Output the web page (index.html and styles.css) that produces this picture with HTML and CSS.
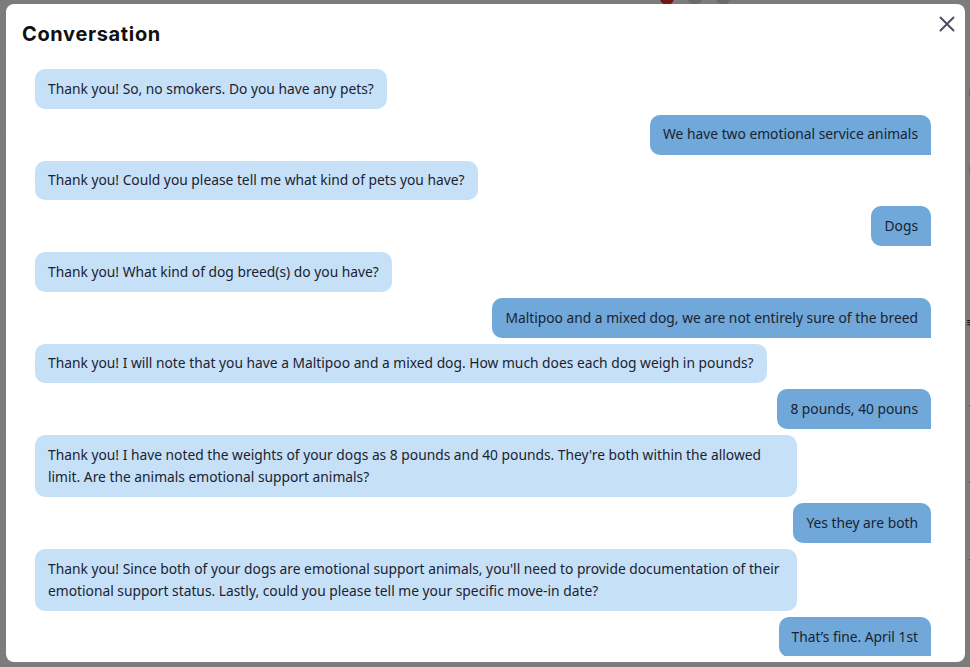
FILE: index.html
```html
<!DOCTYPE html>
<html lang="en">
<head>
<meta charset="utf-8">
<title>Conversation</title>
<link rel="stylesheet" href="styles.css">
</head>
<body>
<div class="page">
  <div class="topbar">
    <span class="dot dot-red"></span>
    <span class="dot"></span>
    <span class="dot"></span>
  </div>
  <div class="row"><span class="frag">r</span></div>
  <div class="row"><span class="frag frag-blue">r</span></div>
  <div class="row"></div>
  <div class="row"><span class="frag">≡</span></div>
  <div class="row"><span class="frag">J</span></div>
  <div class="row"><span class="frag">J</span></div>
  <div class="row"><span class="frag">J</span></div>
  <div class="row"></div>
</div>
<div class="overlay"></div>
<div class="modal" role="dialog" aria-labelledby="modal-title">
  <header class="modal-header">
    <h2 id="modal-title" class="modal-title">Conversation</h2>
    <button class="close" aria-label="Close">
      <svg width="16" height="16" viewBox="0 0 16 16"><path d="M1.5 1.5 L14.5 14.5 M14.5 1.5 L1.5 14.5" stroke="currentColor" stroke-width="2" stroke-linecap="round" fill="none"/></svg>
    </button>
  </header>
  <div class="messages">
    <div class="bubble bot">Thank you! So, no smokers. Do you have any pets?</div>
    <div class="bubble user">We have two emotional service animals</div>
    <div class="bubble bot">Thank you! Could you please tell me what kind of pets you have?</div>
    <div class="bubble user">Dogs</div>
    <div class="bubble bot">Thank you! What kind of dog breed(s) do you have?</div>
    <div class="bubble user">Maltipoo and a mixed dog, we are not entirely sure of the breed</div>
    <div class="bubble bot">Thank you! I will note that you have a Maltipoo and a mixed dog. How much does each dog weigh in pounds?</div>
    <div class="bubble user">8 pounds, 40 pouns</div>
    <div class="bubble bot">Thank you! I have noted the weights of your dogs as 8 pounds and 40 pounds. They're both within the allowed limit. Are the animals emotional support animals?</div>
    <div class="bubble user">Yes they are both</div>
    <div class="bubble bot">Thank you! Since both of your dogs are emotional support animals, you'll need to provide documentation of their emotional support status. Lastly, could you please tell me your specific move-in date?</div>
    <div class="bubble user">That’s fine. April 1st</div>
  </div>
</div>
</body>
</html>
```
FILE: styles.css
```css
* { box-sizing: border-box; }

html, body {
  margin: 0;
  height: 100%;
  overflow: hidden;
}

body {
  font-family: "Noto Sans", "Open Sans", sans-serif;
  background: #f8f8f8;
}

/* underlying page (seen through the overlay) */
.page {
  height: 100%;
}

.topbar {
  height: 53px;
  display: flex;
  align-items: flex-start;
  gap: 14px;
  padding-left: 660px;
  border-bottom: 1px solid #ffffff;
}

.dot {
  width: 14px;
  height: 14px;
  margin-top: -9px;
  border-radius: 50%;
  background: #d6d6d6;
}

.dot-red {
  background: #e03232;
}

.row {
  height: 77px;
  border-bottom: 1px solid #ffffff;
  display: flex;
  align-items: center;
  justify-content: flex-end;
  overflow: hidden;
}

.frag {
  font-size: 13px;
  color: #2a0f3a;
  margin-right: -4px;
}

.frag-blue { color: #1f4a7a; }

.overlay {
  position: fixed;
  inset: 0;
  background: rgba(0, 0, 0, 0.5);
}

/* modal */
.modal {
  position: fixed;
  left: 6px;
  top: 4px;
  width: 959px;
  height: 658px;
  background: #ffffff;
  border-radius: 8px;
  display: flex;
  flex-direction: column;
  padding-bottom: 6px;
}

.modal-header {
  display: flex;
  align-items: flex-start;
  justify-content: space-between;
  padding: 16px 10px 0 16px;
}

.modal-title {
  margin: 0;
  font-family: "Inter", "Noto Sans", sans-serif;
  font-weight: 700;
  font-size: 20px;
  letter-spacing: 0.65px;
  line-height: 28px;
  color: #111111;
}

.close {
  border: 0;
  background: none;
  padding: 0;
  margin-top: -4px;
  width: 16px;
  height: 16px;
  color: #4b5060;
  cursor: pointer;
}

.close svg { display: block; }

.messages {
  flex: 1;
  min-height: 0;
  overflow: hidden;
  margin-top: 21px;
  padding: 0 34px 0 29px;
  display: flex;
  flex-direction: column;
  gap: 6px;
}

.bubble {
  max-width: 85%;
  padding: 8.7px 13px;
  font-size: 13.8px;
  line-height: 22.4px;
  color: #1c2230;
  border-radius: 10px;
  flex-shrink: 0;
}

.bot {
  align-self: flex-start;
  background: #c6e1f7;
}

.user {
  align-self: flex-end;
  background: #6fa8d9;
  border-bottom-right-radius: 0;
}
```
